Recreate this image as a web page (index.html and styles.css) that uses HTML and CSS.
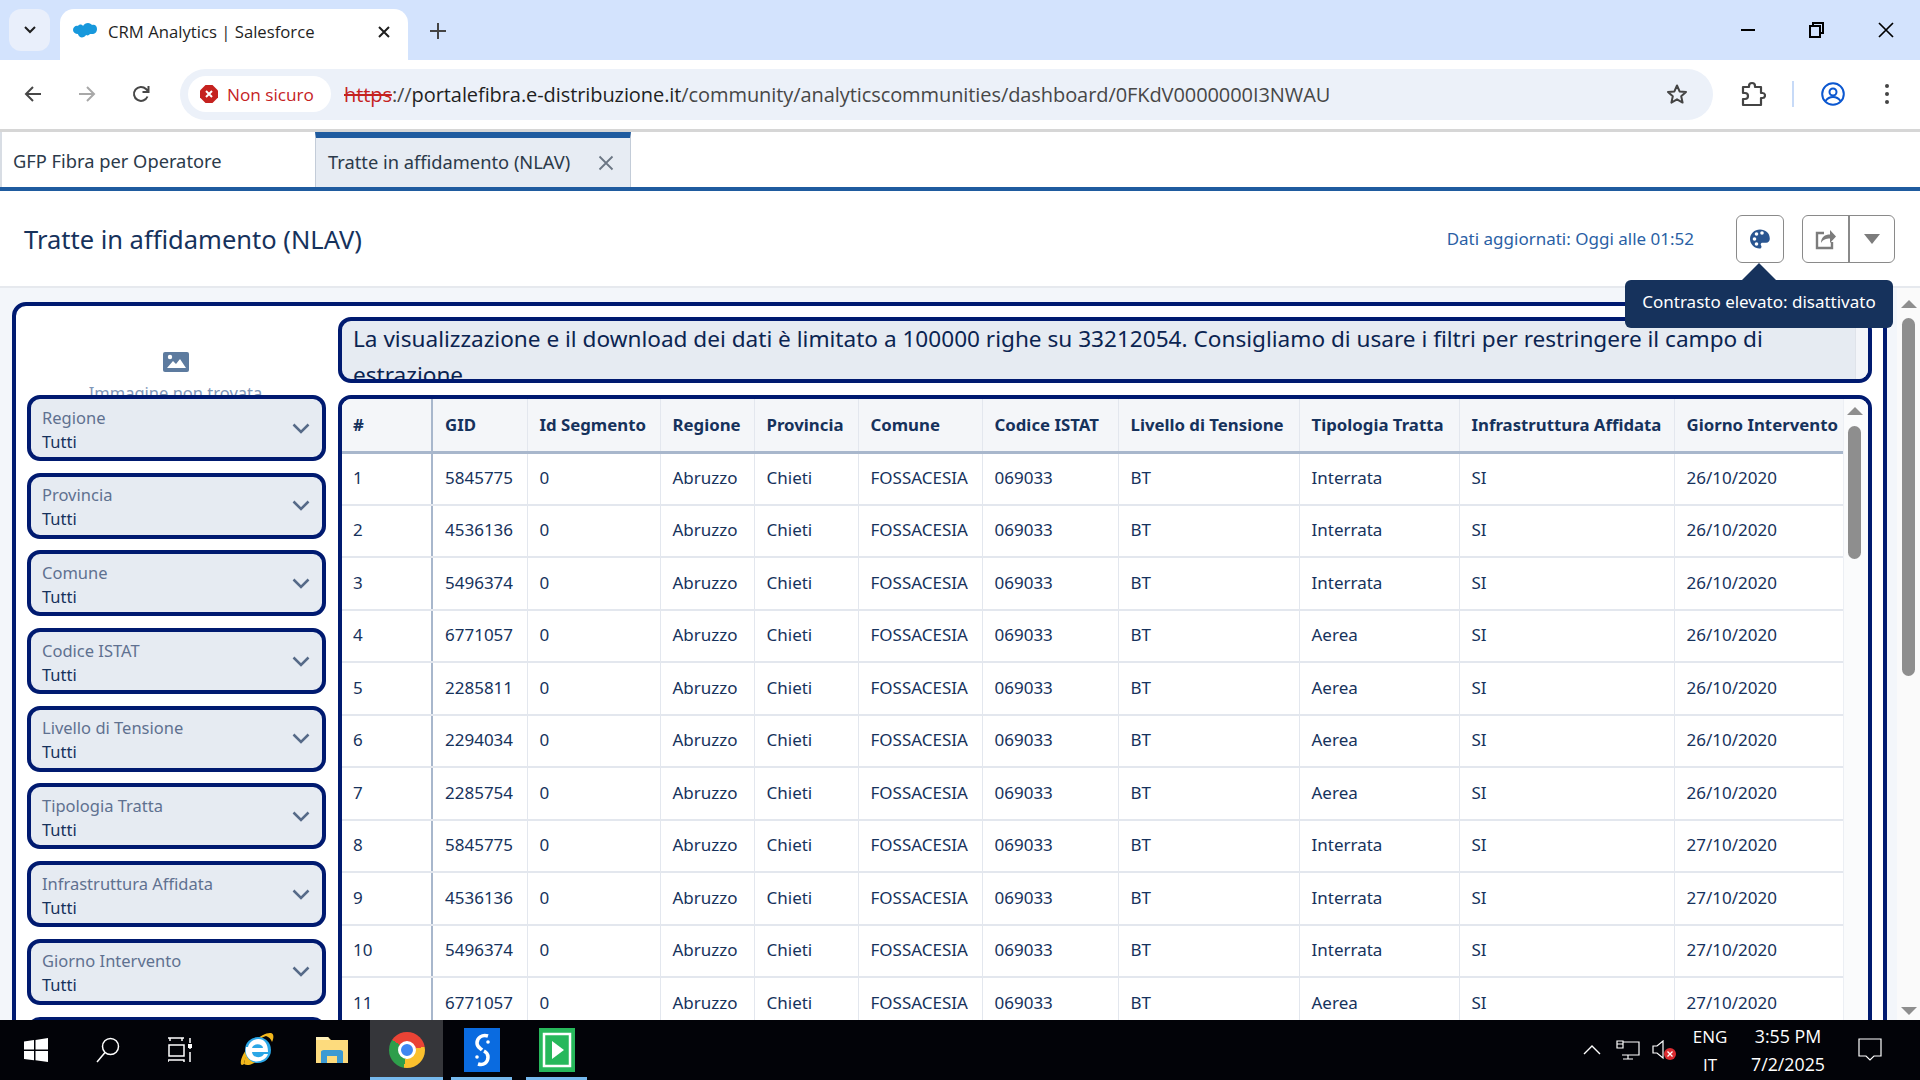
FILE: index.html
```html
<!DOCTYPE html>
<html lang="it">
<head>
<meta charset="utf-8">
<title>CRM Analytics | Salesforce</title>
<link rel="stylesheet" href="styles.css">
</head>
<body>
<div class="screen">
  <div class="tabstrip">
    <div class="tabsearch"><svg width="14" height="10" viewBox="0 0 14 10"><path d="M2 2l5 5 5-5" fill="none" stroke="#1f1f1f" stroke-width="2"/></svg></div>
    <div class="btab">
      <svg class="favicon" width="24" height="18" viewBox="0 0 24 18"><path d="M10 3c1-2 3-3 5-3 2 0 3 1 4 2 3-1 5 1 5 4 0 3-2 5-5 5h-2c-1 1-2 2-4 1-1 2-4 3-6 2-1-1-2-2-2-3-3 0-5-2-5-4 0-3 3-5 5-4 1-2 4-2 5 0z" fill="#1798dc"/></svg>
      <span class="btab-title">CRM Analytics | Salesforce</span>
      <svg class="btab-x" width="14" height="14" viewBox="0 0 14 14"><path d="M2 2l10 10M12 2L2 12" stroke="#1f1f1f" stroke-width="2"/></svg>
    </div>
    <svg class="newtab" width="18" height="18" viewBox="0 0 18 18"><path d="M9 1v16M1 9h16" stroke="#444" stroke-width="2"/></svg>
    <div class="winctl">
      <svg width="16" height="16" viewBox="0 0 16 16"><path d="M1 8h14" stroke="#000" stroke-width="2"/></svg>
      <svg width="16" height="18" viewBox="0 0 16 18"><path d="M1 5h10v11H1zM4 5V2h10v10h-3" fill="none" stroke="#000" stroke-width="2"/></svg>
      <svg width="16" height="16" viewBox="0 0 16 16"><path d="M1 1l14 14M15 1L1 15" stroke="#000" stroke-width="1.7"/></svg>
    </div>
  </div>
  <div class="toolbar">
    <div class="navs">
      <svg width="20" height="20" viewBox="0 0 20 20"><path d="M18 10H3M10 3l-7 7 7 7" fill="none" stroke="#474747" stroke-width="2"/></svg>
      <svg width="20" height="20" viewBox="0 0 20 20"><path d="M2 10h15M10 3l7 7-7 7" fill="none" stroke="#a8a8a8" stroke-width="2"/></svg>
      <svg width="20" height="20" viewBox="0 0 20 20"><path d="M16.500 12.500A7 7 0 1 1 15 5l2 2M17.500 2v6h-6" fill="none" stroke="#474747" stroke-width="2"/></svg>
    </div>
    <div class="omnibox">
      <div class="chip">
        <svg width="18" height="18" viewBox="0 0 18 18"><path d="M5.500 0h7L18 5.500v7L12.500 18h-7L0 12.500v-7z" fill="#c5221f"/><path d="M6 6l6 6M12 6l-6 6" stroke="#fff" stroke-width="2"/></svg>
        <span>Non sicuro</span>
      </div>
      <div class="url"><span class="https">https</span>://<span class="host">portalefibra.e-distribuzione.it</span>/community/analyticscommunities/dashboard/0FKdV0000000I3NWAU</div>
      <svg class="star" width="22" height="22" viewBox="0 0 22 22"><path d="M11 2.500l2.600 5.900 6.400.6-4.800 4.300 1.400 6.300L11 16.300l-5.600 3.300 1.400-6.300L2 9l6.400-.6z" fill="none" stroke="#444" stroke-width="2" stroke-linejoin="round"/></svg>
    </div>
    <div class="tools">
      <svg class="t-ext" width="26" height="26" viewBox="0 0 26 26"><path d="M3 6h6V5a3 3 0 0 1 6 0v1h6v6h1.500a2.500 2.500 0 0 1 0 5H21v7H3v-6h2a3 3 0 0 0 0-6H3z" fill="none" stroke="#444" stroke-width="2.200" stroke-linejoin="round"/></svg>
      <span class="t-sep"></span>
      <svg class="t-prof" width="24" height="24" viewBox="0 0 24 24"><circle cx="12" cy="12" r="10.800" fill="none" stroke="#0b57d0" stroke-width="2"/><circle cx="12" cy="10" r="3.500" fill="none" stroke="#0b57d0" stroke-width="2"/><path d="M4.500 19c2-3 4.500-4 7.500-4s5.500 1 7.500 4" fill="none" stroke="#0b57d0" stroke-width="2"/></svg>
      <svg class="t-dots" width="6" height="22" viewBox="0 0 6 22"><circle cx="3" cy="3" r="2" fill="#444"/><circle cx="3" cy="11" r="2" fill="#444"/><circle cx="3" cy="19" r="2" fill="#444"/></svg>
    </div>
  </div>

  <div class="page">
    <div class="apptabs">
      <div class="apptab">GFP Fibra per Operatore</div>
      <div class="apptab apptab-active">
        <span>Tratte in affidamento (NLAV)</span>
        <svg width="16" height="16" viewBox="0 0 16 16"><path d="M1.500 1.500l13 13M14.500 1.500l-13 13" stroke="#6b7684" stroke-width="1.800"/></svg>
      </div>
    </div>
    <div class="dashhead">
      <h1 class="dashtitle">Tratte in affidamento (NLAV)</h1>
      <div class="updated">Dati aggiornati: Oggi alle 01:52</div>
      <div class="btn btn-palette">
        <svg width="20" height="20" viewBox="0 0 20 20"><path d="M10 .5C4.500.5 0 4.700 0 10s4.500 9.500 9.500 9.500c1.500 0 2-1 2-1.800 0-1.200-.8-1.500-.8-2.500 0-.9.8-1.500 1.800-1.500h3.500c2.500 0 3.800-1.800 3.800-4C19.800 4 15.500.5 10 .5z" fill="#2a5590"/><circle cx="4.500" cy="10" r="1.800" fill="#fff"/><circle cx="6.500" cy="5" r="1.800" fill="#fff"/><circle cx="12" cy="4" r="1.800" fill="#fff"/><circle cx="6.500" cy="15" r="1.800" fill="#fff"/></svg>
      </div>
      <div class="btngroup">
        <div class="btn-seg">
          <svg width="22" height="22" viewBox="0 0 22 22"><path d="M9 5H2v15h15v-6" fill="none" stroke="#7c7c7c" stroke-width="2.400"/><path d="M6 15c0-6 4-8.500 9-8.500V2l6 6.500-6 6.500v-4.500c-4 0-7 1-9 4.500z" fill="#7c7c7c"/></svg>
        </div>
        <div class="btn-seg btn-seg-last">
          <svg width="16" height="10" viewBox="0 0 16 10"><path d="M0 0h16L8 10z" fill="#7c7c7c"/></svg>
        </div>
      </div>
      <div class="tooltip">Contrasto elevato: disattivato</div>
    </div>

    <div class="canvas">
      <div class="panel">
        <aside class="side">
          <div class="imgmissing">
            <svg width="26" height="20" viewBox="0 0 26 20"><rect width="26" height="20" rx="2" fill="#5d7b9f"/><circle cx="7" cy="5" r="2.200" fill="#fff"/><path d="M4 16l6-7 3 3 4-5 6 9z" fill="#fff"/></svg>
            <div class="imgmissing-text">Immagine non trovata</div>
          </div>
          <div class="filter"><div><div class="f-label">Regione</div><div class="f-value">Tutti</div></div><svg class="chev" width="18" height="11" viewBox="0 0 18 11"><path d="M1.500 1.500L9 9l7.500-7.500" fill="none" stroke="#566a88" stroke-width="2.500"/></svg></div>
          <div class="filter"><div><div class="f-label">Provincia</div><div class="f-value">Tutti</div></div><svg class="chev" width="18" height="11" viewBox="0 0 18 11"><path d="M1.500 1.500L9 9l7.500-7.500" fill="none" stroke="#566a88" stroke-width="2.500"/></svg></div>
          <div class="filter"><div><div class="f-label">Comune</div><div class="f-value">Tutti</div></div><svg class="chev" width="18" height="11" viewBox="0 0 18 11"><path d="M1.500 1.500L9 9l7.500-7.500" fill="none" stroke="#566a88" stroke-width="2.500"/></svg></div>
          <div class="filter"><div><div class="f-label">Codice ISTAT</div><div class="f-value">Tutti</div></div><svg class="chev" width="18" height="11" viewBox="0 0 18 11"><path d="M1.500 1.500L9 9l7.500-7.500" fill="none" stroke="#566a88" stroke-width="2.500"/></svg></div>
          <div class="filter"><div><div class="f-label">Livello di Tensione</div><div class="f-value">Tutti</div></div><svg class="chev" width="18" height="11" viewBox="0 0 18 11"><path d="M1.500 1.500L9 9l7.500-7.500" fill="none" stroke="#566a88" stroke-width="2.500"/></svg></div>
          <div class="filter"><div><div class="f-label">Tipologia Tratta</div><div class="f-value">Tutti</div></div><svg class="chev" width="18" height="11" viewBox="0 0 18 11"><path d="M1.500 1.500L9 9l7.500-7.500" fill="none" stroke="#566a88" stroke-width="2.500"/></svg></div>
          <div class="filter"><div><div class="f-label">Infrastruttura Affidata</div><div class="f-value">Tutti</div></div><svg class="chev" width="18" height="11" viewBox="0 0 18 11"><path d="M1.500 1.500L9 9l7.500-7.500" fill="none" stroke="#566a88" stroke-width="2.500"/></svg></div>
          <div class="filter"><div><div class="f-label">Giorno Intervento</div><div class="f-value">Tutti</div></div><svg class="chev" width="18" height="11" viewBox="0 0 18 11"><path d="M1.500 1.500L9 9l7.500-7.500" fill="none" stroke="#566a88" stroke-width="2.500"/></svg></div>
          <div class="filter"></div>
        </aside>
        <main class="mainpane">
          <div class="notice">
            <div class="notice-text">La visualizzazione e il download dei dati è limitato a 100000 righe su 33212054. Consigliamo di usare i filtri per restringere il campo di estrazione</div>
            <div class="notice-bar"></div>
          </div>
          <div class="tablebox">
            <div class="tablewrap">
              <table class="grid">
                <colgroup>
                  <col class="c0"><col class="c1"><col class="c2"><col class="c3"><col class="c4"><col class="c5"><col class="c6"><col class="c7"><col class="c8"><col class="c9"><col class="c10">
                </colgroup>
                <thead><tr><th class="sep">#</th><th>GID</th><th>Id Segmento</th><th>Regione</th><th>Provincia</th><th>Comune</th><th>Codice ISTAT</th><th>Livello di Tensione</th><th>Tipologia Tratta</th><th>Infrastruttura Affidata</th><th>Giorno Intervento</th></tr></thead>
                <tbody>
                  <tr><td class="sep">1</td><td>5845775</td><td>0</td><td>Abruzzo</td><td>Chieti</td><td>FOSSACESIA</td><td>069033</td><td>BT</td><td>Interrata</td><td>SI</td><td>26/10/2020</td></tr>
                  <tr><td class="sep">2</td><td>4536136</td><td>0</td><td>Abruzzo</td><td>Chieti</td><td>FOSSACESIA</td><td>069033</td><td>BT</td><td>Interrata</td><td>SI</td><td>26/10/2020</td></tr>
                  <tr><td class="sep">3</td><td>5496374</td><td>0</td><td>Abruzzo</td><td>Chieti</td><td>FOSSACESIA</td><td>069033</td><td>BT</td><td>Interrata</td><td>SI</td><td>26/10/2020</td></tr>
                  <tr><td class="sep">4</td><td>6771057</td><td>0</td><td>Abruzzo</td><td>Chieti</td><td>FOSSACESIA</td><td>069033</td><td>BT</td><td>Aerea</td><td>SI</td><td>26/10/2020</td></tr>
                  <tr><td class="sep">5</td><td>2285811</td><td>0</td><td>Abruzzo</td><td>Chieti</td><td>FOSSACESIA</td><td>069033</td><td>BT</td><td>Aerea</td><td>SI</td><td>26/10/2020</td></tr>
                  <tr><td class="sep">6</td><td>2294034</td><td>0</td><td>Abruzzo</td><td>Chieti</td><td>FOSSACESIA</td><td>069033</td><td>BT</td><td>Aerea</td><td>SI</td><td>26/10/2020</td></tr>
                  <tr><td class="sep">7</td><td>2285754</td><td>0</td><td>Abruzzo</td><td>Chieti</td><td>FOSSACESIA</td><td>069033</td><td>BT</td><td>Aerea</td><td>SI</td><td>26/10/2020</td></tr>
                  <tr><td class="sep">8</td><td>5845775</td><td>0</td><td>Abruzzo</td><td>Chieti</td><td>FOSSACESIA</td><td>069033</td><td>BT</td><td>Interrata</td><td>SI</td><td>27/10/2020</td></tr>
                  <tr><td class="sep">9</td><td>4536136</td><td>0</td><td>Abruzzo</td><td>Chieti</td><td>FOSSACESIA</td><td>069033</td><td>BT</td><td>Interrata</td><td>SI</td><td>27/10/2020</td></tr>
                  <tr><td class="sep">10</td><td>5496374</td><td>0</td><td>Abruzzo</td><td>Chieti</td><td>FOSSACESIA</td><td>069033</td><td>BT</td><td>Interrata</td><td>SI</td><td>27/10/2020</td></tr>
                  <tr><td class="sep">11</td><td>6771057</td><td>0</td><td>Abruzzo</td><td>Chieti</td><td>FOSSACESIA</td><td>069033</td><td>BT</td><td>Aerea</td><td>SI</td><td>27/10/2020</td></tr>
                </tbody>
              </table>
            </div>
            <div class="vscroll vscroll-inner">
              <span class="arrow-up"></span>
              <span class="thumb thumb-inner"></span>
            </div>
          </div>
        </main>
      </div>
      <div class="vscroll vscroll-page">
        <span class="arrow-up"></span>
        <span class="thumb thumb-page"></span>
        <span class="arrow-down"></span>
      </div>
    </div>
  </div>

  <div class="taskbar">
    <svg class="tb-win" width="24" height="24" viewBox="0 0 24 24"><path d="M0 3.500l10-1.400v9.400H0zM11.500 1.900L24 0v11.500H11.500zM0 13h10v9.300L0 21zM11.500 13H24v11l-12.500-1.700z" fill="#fff"/></svg>
    <svg class="tb-search" width="24" height="26" viewBox="0 0 24 26"><circle cx="14.500" cy="9.500" r="8" fill="none" stroke="#fff" stroke-width="1.500"/><path d="M9 15.500L1 25" stroke="#fff" stroke-width="1.500"/></svg>
    <svg class="tb-view" width="24" height="26" viewBox="0 0 24 26"><path d="M0 1h16M2 1v3M14 1v3M1 8h15v11H1zM0 25v-2h16v2M22 1v5M22 9v3M22 15v10" fill="none" stroke="#fff" stroke-width="1.500"/><rect x="20" y="7" width="4" height="4" fill="#fff"/></svg>
    <svg class="tb-ie" width="34" height="36" viewBox="0 0 34 36"><path d="M4 32C-1 36 0 26 6 18 13 8 25 0 31 1c3 .5 3 5 1 9-1-3-3-5-6-6C16 7 6 20 4 32z" fill="#f2b71c"/><path d="M4 32c4 3 10-1 12-2-4-1-8-3-10-8z" fill="#f2b71c"/><circle cx="18" cy="18" r="13" fill="#2aa6e6"/><path d="M8 15c1-5 6-8 10.500-8C24 7 28 11 28 20H12c.5 6 9 7 12 2h4c-3 9-17 10-21 2-1.500-3-1.500-6-1-9z" fill="#fff"/><path d="M12 16h11c-.5-5-10-5-11 0z" fill="#2aa6e6"/></svg>
    <svg class="tb-folder" width="32" height="30" viewBox="0 0 32 30"><path d="M0 2h12l3 3h17v23H0z" fill="#fddb7d"/><path d="M0 2h12l2 3H0z" fill="#fff0b8"/><path d="M5 28V17a4 2 0 0 1 3-2h16a4 2 0 0 1 3 2v11h-6v-7H11v7z" fill="#3c9ad3"/></svg>
    <div class="tb-cell tb-chrome"><span class="chrome-logo"><span class="chrome-core"></span></span></div>
    <div class="tb-cell tb-app1"><svg width="36" height="44" viewBox="0 0 36 44"><rect width="36" height="44" fill="#0a6be0"/><path d="M24 8c-6-2-11 2-11 7 0 4 3 5 5 7" fill="none" stroke="#fff" stroke-width="3.500"/><path d="M14 36c6 2 10-2 10-7 0-3-2-5-4-6" fill="none" stroke="#fff" stroke-width="3.500"/><circle cx="24" cy="14" r="1.800" fill="#fff"/><circle cx="13" cy="29" r="1.800" fill="#fff"/></svg></div>
    <div class="tb-cell tb-app2"><svg width="36" height="44" viewBox="0 0 36 44"><rect width="36" height="44" fill="#27b85b"/><rect x="5" y="6" width="26" height="32" fill="none" stroke="#fff" stroke-width="2.500"/><path d="M13 13l12 9-12 9z" fill="#fff"/></svg></div>
    <div class="tray">
      <svg width="18" height="10" viewBox="0 0 18 10"><path d="M1 9l8-8 8 8" fill="none" stroke="#fff" stroke-width="1.400"/></svg>
      <svg class="tray-net" width="24" height="20" viewBox="0 0 24 20"><path d="M1 1h6v7H1zM1 4h6M7 2h16v13H6M12 15v4M7 19h10" fill="none" stroke="#fff" stroke-width="1.200"/></svg>
      <span class="tray-vol"><svg width="24" height="20" viewBox="0 0 24 20"><path d="M1 6h4l6-5v17l-6-5H1z" fill="none" stroke="#fff" stroke-width="1.200"/><circle cx="18" cy="14" r="6" fill="#d92b30"/><path d="M15.500 11.500l5 5M20.500 11.500l-5 5" stroke="#fff" stroke-width="1.300"/></svg></span>
      <div class="tray-lang"><span>ENG</span><span>IT</span></div>
      <div class="tray-clock"><span>3:55 PM</span><span>7/2/2025</span></div>
      <svg class="tray-note" width="24" height="24" viewBox="0 0 24 24"><path d="M1 1h22v17h-7l-4 4-4-4H1z" fill="none" stroke="#fff" stroke-width="1.200"/></svg>
    </div>
  </div>
</div>
</body>
</html>
```
FILE: styles.css
```css
* { box-sizing: border-box; }
html, body { margin: 0; padding: 0; height: 100%; overflow: hidden; }
body { font-family: "Noto Sans", "Open Sans", sans-serif; color: #16325c; background: #fff; }
.screen { width: 1920px; height: 1080px; display: flex; flex-direction: column; overflow: hidden; }
svg { display: block; flex: none; }

/* browser tab strip */
.tabstrip { height: 60px; flex: none; background: #d3e3fd; display: flex; align-items: flex-end; padding-left: 9px; }
.tabsearch { width: 41px; height: 42px; margin-bottom: 9px; border-radius: 12px; background: #e9effb; display: flex; align-items: center; justify-content: center; }
.btab { width: 348px; height: 51px; margin-left: 10px; background: #fff; border-radius: 14px 14px 0 0; display: flex; align-items: center; padding: 0 17px 6px 13px; }
.btab-title { margin-left: 11px; font-size: 16.700px; color: #1f1f1f; font-family: "Open Sans", "Noto Sans", sans-serif; flex: 1; white-space: nowrap; }
.newtab { margin: 0 0 20px 21px; }
.winctl { margin-left: auto; margin-bottom: 21px; display: flex; gap: 53px; align-items: center; padding-right: 26px; }

/* toolbar */
.toolbar { height: 72px; flex: none; background: #fff; display: flex; align-items: center; padding: 0 0 1px 23px; border-bottom: 3px solid #d6d6d6; border-radius: 14px 14px 0 0; }
.navs { display: flex; gap: 34px; width: 157px; }
.omnibox { width: 1533px; height: 51px; border-radius: 26px; background: #ecf1f9; display: flex; align-items: center; padding: 0 25px 0 8px; }
.chip { width: 143px; height: 36px; border-radius: 18px; background: #fff; display: flex; align-items: center; gap: 9px; padding-left: 12px; color: #c5221f; font-size: 17.200px; font-family: "Open Sans", sans-serif; white-space: nowrap; }
.url { margin-left: 13px; flex: 1; font-size: 20px; color: #474747; font-family: "Open Sans", sans-serif; white-space: nowrap; letter-spacing: -.08px; }
.host { color: #1f1f1f; }
.https { color: #c5221f; text-decoration: line-through; }
.tools { display: flex; align-items: center; }
.t-ext { margin-left: 27px; }
.t-sep { width: 2px; height: 26px; background: #c7daf7; margin-left: 26px; }
.t-prof { margin-left: 27px; }
.t-dots { margin-left: 39px; }

/* page */
.page { flex: 1; min-height: 0; display: flex; flex-direction: column; background: #f3f6fa; position: relative; }
.apptabs { height: 59px; flex: none; display: flex; background: #fff; border-bottom: 4px solid #1f5b9f; }
.apptab { width: 315px; padding: 4px 0 0 11px; font-size: 18.300px; line-height: 49px; color: #2b3a4a; background: #fff; border-left: 2px solid #d8dde4; white-space: nowrap; }
.apptab-active { width: 316px; background: #e7ecf3; border-left: 1px solid #c3ccd8; border-right: 1px solid #c3ccd8; border-top: 6px solid #1f5b9f; padding: 0 16px 0 12px; display: flex; align-items: center; justify-content: space-between; line-height: 1; }
.dashhead { height: 97px; flex: none; background: #fff; display: flex; align-items: center; padding: 0 25px 0 24px; border-bottom: 2px solid #e6e9ee; position: relative; }
.dashtitle { margin: 0; font-weight: 400; font-size: 25.500px; color: #16325c; flex: 1; white-space: nowrap; }
.updated { font-size: 17px; line-height: 20px; height: 20px; overflow: hidden; color: #2a5fa5; margin-right: 42px; white-space: nowrap; }
.btn { width: 48px; height: 48px; border: 1px solid #8a8a8a; border-radius: 6px; display: flex; align-items: center; justify-content: center; background: #fff; }
.btngroup { display: flex; margin-left: 18px; height: 48px; border: 1px solid #8a8a8a; border-radius: 6px; }
.btn-seg { width: 47px; display: flex; align-items: center; justify-content: center; border-right: 2px solid #8a8a8a; }
.btn-seg-last { border-right: 0; width: 44px; }
.tooltip { position: absolute; left: 1625px; top: 89px; width: 268px; height: 48px; padding-bottom: 5px; background: #16325c; color: #fff; border-radius: 6px; font-size: 17px; display: flex; align-items: center; justify-content: center; white-space: nowrap; z-index: 5; }
.tooltip::before { content: ""; position: absolute; left: 117px; top: -17px; border: 17px solid transparent; border-top: 0; border-bottom-color: #16325c; }

.canvas { flex: 1; min-height: 0; display: flex; overflow: hidden; }
.panel { width: 1875px; height: 900px; margin: 14px 0 0 12px; border: 4px solid #001a70; border-radius: 14px; background: #fff; display: flex; flex: none; overflow: hidden; }
.side { width: 322px; flex: none; padding: 0 0 0 11px; display: flex; flex-direction: column; gap: 11.700px; }
.imgmissing { height: 89px; flex: none; display: flex; flex-direction: column; align-items: center; overflow: hidden; padding-top: 46px; margin-right: 14px; margin-bottom: -11.700px; }
.imgmissing-text { margin-top: 10px; font-size: 16.500px; line-height: 22px; color: #7f96b8; white-space: nowrap; }
.filter { width: 299px; height: 66px; flex: none; border: 4px solid #001a70; border-radius: 13px; background: #e6ebf2; display: flex; align-items: center; justify-content: space-between; padding: 0 12px 0 11px; }
.f-label { font-size: 16.500px; line-height: 24px; color: #5f7190; white-space: nowrap; margin-top: 3px; }
.f-value { font-size: 16.500px; line-height: 24px; color: #16325c; }
.mainpane { flex: 1; min-width: 0; display: flex; flex-direction: column; padding-top: 11px; gap: 12px; }
.notice { height: 66px; flex: none; width: 1534px; border: 4px solid #001a70; border-radius: 13px; background: #e6ebf2; display: flex; overflow: hidden; }
.notice-text { flex: 1; font-size: 22.600px; line-height: 36px; color: #0b2451; padding: 0 0 0 11px; }
.notice-bar { width: 13px; flex: none; background: #f3f5f9; border-left: 1px solid #dfe3ea; margin-left: 32px; }
.tablebox { width: 1534px; height: 700px; flex: none; border: 4px solid #001a70; border-radius: 13px 13px 0 0; display: flex; overflow: hidden; background: #fff; }
.tablewrap { width: 1501px; flex: none; }
.grid { width: 1501px; table-layout: fixed; border-collapse: collapse; font-size: 17px; }
.c0 { width: 90px; } .c1 { width: 95px; } .c2 { width: 133px; } .c3 { width: 94px; } .c4 { width: 104px; } .c5 { width: 124px; }
.c6 { width: 136px; } .c7 { width: 181px; } .c8 { width: 160px; } .c9 { width: 215px; } .c10 { width: 169px; }
.grid th { height: 53px; padding: 0 0 0 12px; background: #f4f6f9; color: #16325c; font-size: 16.800px; font-weight: 700; text-align: left; border-left: 1px solid #e3e7ee; border-bottom: 3px solid #a8b7cc; white-space: nowrap; overflow: hidden; }
.grid td { height: 52.500px; padding: 0 0 2px 12px; color: #16325c; border-left: 1px solid #e3e7ee; border-bottom: 2px solid #e3e7ee; white-space: nowrap; overflow: hidden; }
.grid th:first-child, .grid td:first-child { border-left: 0; padding-left: 11px; }
.grid .sep { border-right: 2px solid #a8b7cc; }
.grid th:nth-child(2), .grid td:nth-child(2) { border-left: 0; }
.vscroll { display: flex; flex-direction: column; align-items: center; }
.vscroll-inner { width: 25px; flex: none; background: #fafbfc; border-left: 1px solid #eceff4; padding: 8px 3px 0 0; }
.vscroll-page { flex: 1; margin-left: 10px; background: #fafafa; padding-top: 12px; padding-bottom: 5px; }
.arrow-up { width: 0; height: 0; border: 8px solid transparent; border-top: 0; border-bottom-color: #8e8e8e; flex: none; }
.arrow-down { width: 0; height: 0; border: 8px solid transparent; border-bottom: 0; border-top-color: #8e8e8e; flex: none; margin-top: auto; }
.thumb { width: 13px; background: #8e8e8e; border-radius: 7px; display: block; flex: none; }
.thumb-inner { height: 133px; margin-top: 11px; }
.thumb-page { height: 358px; margin-top: 10px; }

/* taskbar */
.taskbar { height: 60px; flex: none; background: #020308; display: flex; align-items: center; position: relative; }
.tb-win { margin-left: 24px; }
.tb-search { margin-left: 48px; }
.tb-view { margin-left: 48px; }
.tb-ie { margin-left: 48px; }
.tb-folder { margin-left: 42px; }
.tb-cell { height: 60px; display: flex; align-items: center; justify-content: center; border-bottom: 3px solid #76b9ed; }
.tb-chrome { width: 73px; margin-left: 22px; background: #35363a; padding-top: 3px; }
.tb-app1 { width: 61px; margin-left: 8px; padding-top: 3px; }
.tb-app2 { width: 61px; margin-left: 14px; padding-top: 3px; }
.chrome-logo { width: 36px; height: 36px; border-radius: 50%; background: conic-gradient(#ea4335 0 80deg, #fbc02d 80deg 190deg, #2e9e4b 190deg 305deg, #ea4335 305deg); display: flex; align-items: center; justify-content: center; }
.chrome-core { width: 18px; height: 18px; border-radius: 50%; background: #3f86f1; border: 3px solid #fff; }
.tray { margin-left: auto; display: flex; align-items: center; color: #fff; font-size: 17px; font-family: "Open Sans", "Noto Sans", sans-serif; padding-right: 38px; }
.tray-net { margin-left: 15px; }
.tray-vol { margin-left: 12px; }
.tray-lang { width: 34px; margin-left: 17px; display: flex; flex-direction: column; align-items: center; gap: 5px; line-height: 23px; }
.tray-clock { width: 110px; margin-left: 2px; display: flex; flex-direction: column; align-items: center; gap: 5px; line-height: 23px; margin-right: 19px; padding-left: 8px; font-size: 17.800px; }
.tray-note { margin-left: 0; }
```
